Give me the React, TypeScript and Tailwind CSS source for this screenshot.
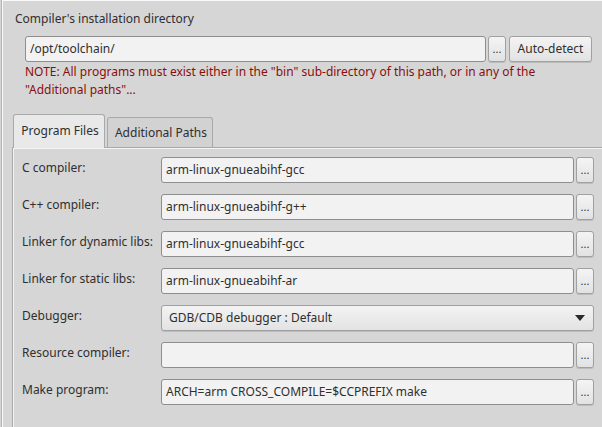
import React from 'react'

const rows = [
  { label: 'C compiler:', value: 'arm-linux-gnueabihf-gcc' },
  { label: 'C++ compiler:', value: 'arm-linux-gnueabihf-g++' },
  { label: 'Linker for dynamic libs:', value: 'arm-linux-gnueabihf-gcc' },
  { label: 'Linker for static libs:', value: 'arm-linux-gnueabihf-ar' },
  { label: 'Debugger:', value: 'GDB/CDB debugger : Default', combo: true },
  { label: 'Resource compiler:', value: '' },
  { label: 'Make program:', value: 'ARCH=arm CROSS_COMPILE=$CCPREFIX make' },
]

const Dots = ({ className }: { className: string }) => (
  <button className={`flex shrink-0 items-center justify-center rounded-[3px] border border-[#a0a0a0] bg-gradient-to-b from-[#f4f4f4] to-[#e2e2e2] pb-[2px] text-[11px] leading-none text-[#333] shadow-[0_1px_0_#bcbcbc] ${className}`}>
    ...
  </button>
)

export default function App() {
  return (
    <div
      className="h-[427px] w-[602px] overflow-hidden bg-[#d6d6d6] pl-[2px] text-[12px] text-[#2f2f2f]"
      style={{ fontFamily: '"Noto Sans", "Open Sans", sans-serif' }}
    >
      <div className="h-full border-l border-t border-l-[#fafafa] border-t-[#fafafa] shadow-[-1px_0_0_#b4b4b4]">
        <div className="pl-[12px] pt-[9px] leading-[17px]">Compiler's installation directory</div>

        <div className="ml-[22px] mt-[9px] flex h-[26px] gap-[2px]">
          <div className="flex w-[461px] items-center rounded-[3px] border border-[#8e8e8e] bg-[#f2f2f2] pl-[4px]">
            /opt/toolchain/
          </div>
          <Dots className="w-[18px]" />
          <button className="ml-[1px] w-[83px] rounded-[3px] border border-[#a0a0a0] bg-gradient-to-b from-[#f4f4f4] to-[#e2e2e2] text-[12px] text-[#2f2f2f] shadow-[0_1px_0_#bcbcbc]">
            Auto-detect
          </button>
        </div>

        <div className="ml-[22px] mt-[1px] w-[520px] leading-[18px] text-[#8b0d0d]">
          NOTE: All programs must exist either in the "bin" sub-directory of this path, or in any of the "Additional paths"...
        </div>

        <div className="ml-[9px] mt-[15px]">
          <div className="flex items-end">
            <div className="relative z-10 -mb-px ml-px flex h-[34px] w-[92px] items-center justify-center rounded-t-[3px] border border-b-0 border-[#a9a9a9] bg-[#e9e9e9] pb-[2px] pl-[2px]">
              Program Files
            </div>
            <div className="ml-[2px] flex h-[30px] w-[106px] items-center justify-center rounded-t-[3px] border border-b-0 border-[#a9a9a9] bg-[#d2d2d2] pl-[2px]">
              Additional Paths
            </div>
          </div>
          <div className="flex h-[300px] flex-col gap-[11px] border-l border-t border-[#a9a9a9] pl-[9px] pt-[9px] shadow-[inset_1px_1px_0_#f4f4f4]">
            {rows.map((r) => (
              <div key={r.label} className="flex h-[26px]">
                <div className="w-[139px] shrink-0 pt-[2px] leading-[17px]">{r.label}</div>
                {r.combo ? (
                  <div className="flex w-[433px] items-center justify-between rounded-[3px] border border-[#a0a0a0] bg-gradient-to-b from-[#f3f3f3] to-[#e3e3e3] pl-[7px] pr-[8px] shadow-[0_1px_0_#bcbcbc]">
                    <span>{r.value}</span>
                    <svg width="10" height="6" viewBox="0 0 10 6">
                      <path d="M0 0h10L5 6z" fill="#2a2a2a" />
                    </svg>
                  </div>
                ) : (
                  <>
                    <div className="flex w-[413px] items-center rounded-[3px] border border-[#8e8e8e] bg-[#f2f2f2] pl-[4px]">
                      {r.value}
                    </div>
                    <Dots className="ml-[2px] w-[18px]" />
                  </>
                )}
              </div>
            ))}
          </div>
        </div>
      </div>
    </div>
  )
}
